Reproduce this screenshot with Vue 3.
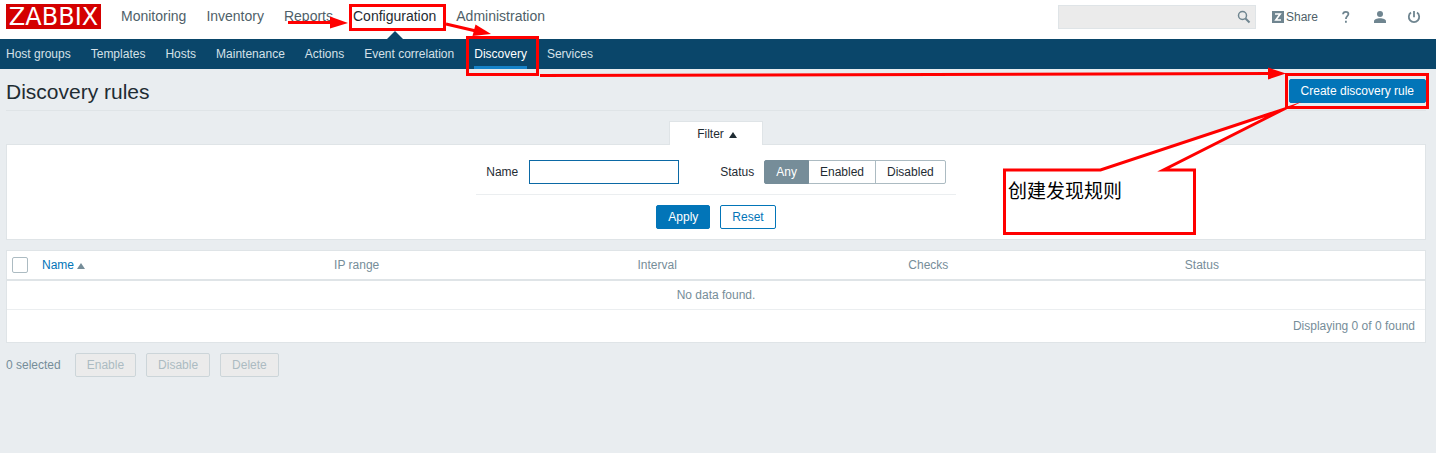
<script setup>
import { ref } from 'vue'

const mainMenu = ['Monitoring', 'Inventory', 'Reports', 'Configuration', 'Administration']
const subMenu = ['Host groups', 'Templates', 'Hosts', 'Maintenance', 'Actions', 'Event correlation', 'Discovery', 'Services']
const statuses = ['Any', 'Enabled', 'Disabled']
const status = ref('Any')
const name = ref('')
const search = ref('')
</script>

<template>
  <div class="page">
    <header class="top">
      <a class="logo" href="#">ZABBIX</a>
      <nav class="main-menu">
        <a v-for="item in mainMenu" :key="item" href="#" :class="{ active: item === 'Configuration' }">{{ item }}</a>
      </nav>
      <form class="search" @submit.prevent>
        <input v-model="search" type="text" aria-label="Search">
        <button type="submit" aria-label="Search">
          <svg width="14" height="14" viewBox="0 0 14 14" fill="none" stroke="#6f8590">
            <circle cx="5.5" cy="5.5" r="4" stroke-width="1.5" />
            <path d="M8.5 8.5L12.5 12.5" stroke-width="2" />
          </svg>
        </button>
      </form>
      <a class="share" href="#">
        <svg width="12" height="12" viewBox="0 0 12 12">
          <path d="M0 0h12v12H0z" fill="#6f8590" />
          <path d="M3 3H8.2L3.8 9H9" fill="none" stroke="#fff" stroke-width="1.6" />
        </svg>
        <span>Share</span>
      </a>
      <a class="tool" href="#" aria-label="Help">
        <svg width="14" height="14" viewBox="0 0 14 14" fill="none" stroke="#6f8590" stroke-width="1.8">
          <path d="M4 4.3C4.1 2.5 5.3 1.8 6.8 1.8C8.5 1.8 9.4 2.7 9.4 4.1C9.4 6.2 6.9 6.3 6.9 9M6.9 10.8V12.8" />
        </svg>
      </a>
      <a class="tool" href="#" aria-label="Profile">
        <svg width="14" height="14" viewBox="0 0 14 14" fill="#6f8590">
          <circle cx="7" cy="4" r="3" />
          <path d="M1 13V11.2C1 9.3 4 8.2 7 8.2S13 9.3 13 11.2V13z" />
        </svg>
      </a>
      <a class="tool" href="#" aria-label="Sign out">
        <svg width="14" height="14" viewBox="0 0 14 14" fill="none" stroke="#6f8590" stroke-width="1.8">
          <path d="M4 2.6A5.2 5.2 0 1 0 10 2.6M7 1V7.2" />
        </svg>
      </a>
    </header>

    <nav class="sub-menu">
      <a v-for="item in subMenu" :key="item" href="#" :class="{ active: item === 'Discovery' }">{{ item }}</a>
    </nav>

    <main>
      <div class="title-bar">
        <h1>Discovery rules</h1>
        <button class="btn primary" type="button">Create discovery rule</button>
      </div>

      <section class="filter">
        <button class="filter-tab" type="button">Filter<i class="up" /></button>
        <form class="filter-panel" @submit.prevent>
          <div class="filter-fields">
            <label for="filter-name">Name</label>
            <input id="filter-name" v-model="name" class="name-input" type="text">
            <span id="status-label" class="status-label">Status</span>
            <div class="segments" role="radiogroup" aria-labelledby="status-label">
              <label v-for="s in statuses" :key="s" :class="{ on: s === status }">
                <input v-model="status" type="radio" name="status" :value="s">{{ s }}
              </label>
            </div>
          </div>
          <div class="filter-actions">
            <button class="btn primary" type="submit">Apply</button>
            <button class="btn outline" type="button">Reset</button>
          </div>
        </form>
      </section>

      <table>
        <thead>
          <tr>
            <th class="c-check"><input type="checkbox" aria-label="Select all"></th>
            <th class="c-name"><a href="#">Name<i class="up" /></a></th>
            <th class="c-range">IP range</th>
            <th class="c-interval">Interval</th>
            <th class="c-checks">Checks</th>
            <th>Status</th>
          </tr>
        </thead>
        <tbody>
          <tr><td class="empty" colspan="6">No data found.</td></tr>
        </tbody>
        <tfoot>
          <tr><td class="total" colspan="6">Displaying 0 of 0 found</td></tr>
        </tfoot>
      </table>

      <div class="bulk">
        <span>0 selected</span>
        <button class="btn" type="button" disabled>Enable</button>
        <button class="btn" type="button" disabled>Disable</button>
        <button class="btn" type="button" disabled>Delete</button>
      </div>
    </main>

    <svg class="notes" width="1436" height="240" viewBox="0 0 1436 240">
      <path
        d="M1004.5 170H1100.5L1283 109.5L1163.5 170H1194.5V233.5H1004.5Z"
        fill="#fff" stroke="#f00" stroke-width="3" stroke-miterlimit="30"
      />
      <g fill="none" stroke="#f00" stroke-width="3">
        <path d="M350.5 5.5H444.5V29.5H350.5Z" />
        <path d="M467.5 37.5H537.5V74.5H467.5Z" />
        <path d="M1286.5 74.5H1427.5V107.5H1286.5Z" />
        <path d="M288 22.5H334M446 24L476 31M540 75.5L1270 73.5" />
      </g>
      <g fill="#f00">
        <path d="M330 16.5L348 23L330 28.5Z" />
        <path d="M475.5 24.5L491 34L472.5 36Z" />
        <path d="M1268 67.5L1286 73.5L1268 79.5Z" />
      </g>
      <text x="1008" y="198">创建发现规则</text>
    </svg>
  </div>
</template>

<style>
body {
  background: #e9edf0;
}
</style>

<style scoped>
.page {
  position: relative;
  font: 12px/14px "Liberation Sans", Arial, sans-serif;
  color: #1f2c33;
}
* {
  box-sizing: border-box;
}
a {
  color: inherit;
  text-decoration: none;
}
button,
input {
  font: inherit;
  margin: 0;
}
.top {
  display: flex;
  align-items: center;
  height: 39px;
  padding: 0 15px 6px 6px;
  background: #fff;
  color: #4f5f69;
}
.logo {
  width: 95px;
  height: 25px;
  background: #d40000;
  color: #fff;
  font: 24px/26px "DejaVu Sans", sans-serif;
  text-align: center;
}
.main-menu {
  display: flex;
  align-self: stretch;
  gap: 20px;
  margin: 0 auto 0 20px;
  font-size: 14px;
  line-height: 32px;
}
.main-menu a {
  position: relative;
}
.main-menu .active {
  color: #1f2c33;
}
.main-menu .active::after {
  content: "";
  position: absolute;
  left: 50%;
  top: 31px;
  margin-left: -8px;
  border: 8px solid transparent;
  border-top: 0;
  border-bottom-color: #0a466a;
}
.search {
  position: relative;
  width: 198px;
  height: 24px;
  margin-right: 16px;
}
.search input {
  width: 100%;
  height: 24px;
  padding: 0 26px 0 5px;
  border: 1px solid #dfe4e7;
  background: #ebebeb;
}
.search button {
  position: absolute;
  top: 5px;
  right: 5px;
  padding: 0;
  border: 0;
  background: none;
}
svg {
  display: block;
}
.share {
  display: flex;
  align-items: center;
  gap: 2px;
  margin-right: 21px;
}
.tool + .tool {
  margin-left: 20px;
}
.sub-menu {
  display: flex;
  gap: 20px;
  height: 30px;
  padding: 0 6px;
  background: #0a466a;
  color: #d5e1e8;
  line-height: 30px;
}
.sub-menu .active {
  color: #fff;
  border-bottom: 3px solid #1583c9;
}
main {
  padding: 0 10px 0 6px;
}
.title-bar {
  display: flex;
  justify-content: space-between;
  align-items: center;
  height: 42px;
  border-bottom: 1px solid #dfe4e7;
}
h1 {
  margin: 0;
  padding-top: 4px;
  font-size: 21px;
  line-height: 24px;
  font-weight: 400;
}
.title-bar .btn {
  margin-top: 3px;
}
.btn {
  height: 24px;
  padding: 0 11px;
  border: 1px solid #0275b8;
  border-radius: 2px;
  background: #fff;
  line-height: 22px;
}
.primary {
  background: #0275b8;
  color: #fff;
}
.outline {
  color: #0275b8;
}
.btn:disabled {
  border-color: #ccd5d9;
  background: #ebebeb;
  color: #acbbc2;
}
.filter {
  display: flex;
  flex-direction: column;
  align-items: center;
  padding-top: 10px;
}
.filter-tab {
  position: relative;
  z-index: 1;
  width: 94px;
  height: 24px;
  margin-bottom: -1px;
  padding: 0 0 0 2px;
  border: 1px solid #dfe4e7;
  border-bottom: 0;
  background: #fff;
  color: #1f2c33;
}
.up {
  display: inline-block;
  margin-left: 3px;
  border: 4px solid transparent;
  border-top: 0;
  border-bottom: 6px solid currentColor;
}
.filter-tab .up {
  margin-left: 5px;
}
.filter-panel {
  display: flex;
  flex-direction: column;
  align-items: center;
  width: 100%;
  padding: 15px 10px 10px;
  border: 1px solid #dfe4e7;
  background: #fff;
}
.filter-fields {
  display: flex;
  align-items: center;
  padding: 0 10px 10px;
  border-bottom: 1px solid #ebeef0;
}
.name-input {
  width: 150px;
  height: 24px;
  margin: 0 41px 0 11px;
  padding: 0 5px;
  border: 1px solid #0b69a5;
  background: #fff;
}
.status-label {
  margin-right: 10px;
}
.segments {
  display: flex;
}
.segments label {
  position: relative;
  height: 24px;
  padding: 0 11px;
  border: 1px solid #acbbc2;
  line-height: 22px;
}
.segments label + label {
  margin-left: -1px;
}
.segments label:first-child {
  border-radius: 2px 0 0 2px;
}
.segments label:last-child {
  border-radius: 0 2px 2px 0;
}
.segments .on {
  z-index: 1;
  border-color: #768d99;
  background: #768d99;
  color: #fff;
}
.segments input {
  position: absolute;
  opacity: 0;
  pointer-events: none;
}
.filter-actions {
  display: flex;
  gap: 10px;
  padding-top: 10px;
}
table {
  width: 100%;
  margin-top: 10px;
  border: 1px solid #dfe4e7;
  border-spacing: 0;
  table-layout: fixed;
  background: #fff;
  color: #768d99;
}
th {
  height: 30px;
  padding: 0 5px;
  border-bottom: 2px solid #dfe4e7;
  font-weight: 400;
  text-align: left;
}
th a {
  color: #0275b8;
}
th .up {
  border-bottom-color: #768d99;
}
.c-check {
  width: 30px;
}
.c-name {
  width: 20.6%;
}
.c-range {
  width: 21.4%;
}
.c-interval {
  width: 19.1%;
}
.c-checks {
  width: 19.5%;
}
th input {
  display: block;
  width: 16px;
  height: 16px;
  appearance: none;
  border: 1px solid #acbbc2;
  border-radius: 2px;
  background: #fff;
}
td {
  padding: 0 10px;
}
.empty {
  height: 29px;
  border-bottom: 1px solid #ebeef0;
  text-align: center;
}
.total {
  height: 32px;
  text-align: right;
}
.bulk {
  display: flex;
  align-items: center;
  gap: 10px;
  padding-top: 10px;
  color: #768d99;
}
.bulk span {
  margin-right: 4px;
}
.notes {
  position: absolute;
  top: 0;
  left: 0;
  pointer-events: none;
}
.notes text {
  fill: #000;
  font: 19px "Noto Sans CJK SC", sans-serif;
}
</style>
